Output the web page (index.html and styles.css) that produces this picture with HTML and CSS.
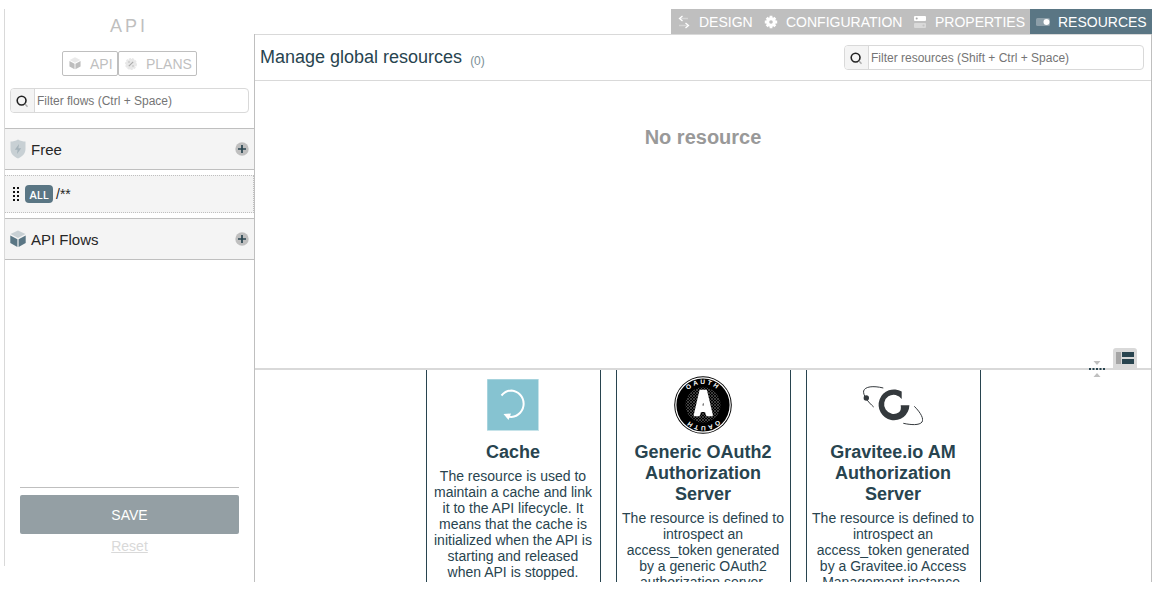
FILE: index.html
```html
<!DOCTYPE html>
<html lang="en">
<head>
<meta charset="utf-8">
<title>Resources</title>
<link rel="stylesheet" href="styles.css">
</head>
<body>
<svg class="defs" width="0" height="0">
  <symbol id="cube" viewBox="0 0 16 18">
    <path class="cube-top" d="M8 0.5 15.5 4 8 8 .5 4Z"/>
    <path class="cube-side" d="M.3 5.6 7.4 9.2V17L.3 13ZM15.7 5.6 8.6 9.2V17l7.1-4Z"/>
  </symbol>
  <symbol id="search" viewBox="0 0 14 14">
    <circle cx="6.600" cy="6.600" r="4.400" fill="none" stroke="#222" stroke-width="1.600"/>
    <path d="M10 10 12.500 12.700" stroke="#aaa" stroke-width="1.400"/>
  </symbol>
  <symbol id="plus" viewBox="0 0 14 14">
    <circle cx="7" cy="7" r="6.7" fill="#bfbfbf"/>
    <path d="M7 3v8M3 7h8" stroke="#28444f" stroke-width="1.7"/>
  </symbol>
</svg>
<div class="app">
  <aside class="side">
    <h1 class="side-title">API</h1>
    <div class="toggle">
      <button class="toggle-btn toggle-api"><svg class="icon pale" width="12" height="13"><use href="#cube"/></svg>API</button>
      <button class="toggle-btn toggle-plans"><svg class="icon" width="14" height="14" viewBox="0 0 14 14"><circle cx="7" cy="7" r="5" fill="#e8e8e8" stroke="#e8e8e8" stroke-width="2" stroke-dasharray="2.100 .9"/><circle cx="7" cy="7" r="4.800" fill="#e8e8e8"/><path d="M4.8 9.2 9.2 4.8" stroke="#aaa" stroke-width="1.1"/><circle cx="5" cy="5" r=".8" fill="#bbb"/><circle cx="9" cy="9" r=".8" fill="#bbb"/></svg>PLANS</button>
    </div>
    <div class="filter">
      <span class="filter-icon"><svg width="14" height="14"><use href="#search"/></svg></span>
      <span class="filter-text">Filter flows (Ctrl + Space)</span>
    </div>
    <div class="group">
      <svg width="16" height="20" viewBox="0 0 16 20"><path d="M8 .5C10.500 2 13 2.600 15.500 2.600V10C15.500 14.500 12.500 17.500 8 19.500 3.500 17.500.5 14.500.5 10V2.600C3 2.600 5.500 2 8 .5Z" fill="#c8d0d4"/><path d="M9 5 4.800 10.800H7.600L7 15l4.200-5.800H8.400Z" fill="#a5b3ba"/></svg>
      <span class="group-name">Free</span>
      <svg width="14" height="14"><use href="#plus"/></svg>
    </div>
    <div class="flow">
      <svg width="8" height="16" viewBox="0 0 8 16" fill="#111"><path d="M1 1h2v2H1zM5 1h2v2H5zM1 5h2v2H1zM5 5h2v2H5zM1 9h2v2H1zM5 9h2v2H5zM1 13h2v2H1zM5 13h2v2H5z"/></svg>
      <span class="method">ALL</span>
      <span class="path">/**</span>
    </div>
    <div class="group">
      <svg class="slate" width="16" height="18"><use href="#cube"/></svg>
      <span class="group-name">API Flows</span>
      <svg width="14" height="14"><use href="#plus"/></svg>
    </div>
    <div class="actions">
      <button class="save">SAVE</button>
      <span class="reset">Reset</span>
    </div>
  </aside>
  <main class="main">
    <nav class="tabs">
      <span class="tab tab-design"><svg class="icon" width="12" height="14" viewBox="0 0 12 14" fill="none" stroke="#fff" stroke-width="1.300"><path d="M4.500 1 1.500 3.500 4.500 6M7.500 8 10.500 10.500 7.500 13"/><path d="M2 3.500H10M1 10.500H10" opacity=".35"/></svg>DESIGN</span>
      <span class="tab tab-config"><svg class="icon" width="14" height="14" viewBox="0 0 14 14"><g stroke="#fff" stroke-width="2.800"><path d="M7 .8V13.200M.8 7H13.200M2.700 2.700 11.300 11.300M11.300 2.700 2.700 11.300"/></g><circle cx="7" cy="7" r="4.800" fill="#fff"/><circle cx="7" cy="7" r="1.800" fill="#bfbfbf"/></svg>CONFIGURATION</span>
      <span class="tab tab-props"><svg class="icon" width="12" height="12" viewBox="0 0 12 12"><rect width="12" height="5" rx="1" fill="#fff"/><rect y="7" width="12" height="5" rx="1" fill="#d9d9d9"/><circle cx="2.700" cy="2.500" r="1" fill="#aaa"/><circle cx="9.500" cy="9.500" r="1" fill="#c3c3c3"/></svg>PROPERTIES</span>
      <span class="tab tab-res"><svg class="icon" width="14" height="8" viewBox="0 0 14 8"><rect width="14" height="8" rx="1.500" fill="#8d9fa9"/><circle cx="10.500" cy="4" r="3" fill="#fff"/></svg>RESOURCES</span>
    </nav>
    <section class="panel">
      <header class="head">
        <h2 class="head-title">Manage global resources<small class="count">(0)</small></h2>
        <div class="filter filter-wide">
          <span class="filter-icon"><svg width="14" height="14"><use href="#search"/></svg></span>
          <span class="filter-text">Filter resources (Shift + Ctrl + Space)</span>
        </div>
      </header>
      <div class="empty">No resource
        <svg class="resizer" width="16" height="16" viewBox="0 0 16 16"><path d="M4.500 0h7L8 4ZM4.500 16h7L8 12Z" fill="#bfbfbf"/><path d="M0 8H16" stroke="#28444f" stroke-width="2" stroke-dasharray="2 1.500"/></svg>
        <svg class="layout" width="24" height="21" viewBox="0 0 24 21"><path d="M0 21V3Q0 0 3 0H21Q24 0 24 3V21Z" fill="#d9d9d9"/><path d="M3 4h5v12H3z" fill="#a5a5a5"/><path d="M9 4h12v5H9zM9 11h12v5H9z" fill="#28444f"/></svg>
      </div>
      <div class="cards">
        <article class="card">
          <svg class="logo" width="60" height="60" viewBox="0 0 60 60"><rect x="4" y="4" width="52" height="52" fill="#c6e3e9"/><rect x="4.500" y="4.500" width="50.500" height="50.500" fill="#86c3d1"/><path d="M18.500 20.500C22 16.500 24.500 15.500 28.500 15.500A13.300 13.300 0 0 1 28.500 42L26 41.700" fill="none" stroke="#fff" stroke-width="2"/><path d="M20.500 39 28 38.500 25.500 45Z" fill="#fff"/></svg>
          <h3 class="card-title">Cache</h3>
          <p class="card-text">The resource is used to maintain a cache and link it to the API lifecycle. It means that the cache is initialized when the API is starting and released when API is stopped.</p>
        </article>
        <article class="card">
          <svg class="logo" width="60" height="60" viewBox="0 0 60 60">
            <defs><pattern id="mesh" width="3" height="3" patternUnits="userSpaceOnUse"><path d="M0 0 3 3M3 0 0 3" stroke="#555" stroke-width=".7"/></pattern>
            <path id="arc-top" d="M9 30A21 21 0 0 1 51 30"/><path id="arc-bottom" d="M51 30A21 21 0 0 1 9 30"/></defs>
            <circle cx="30" cy="30" r="28.800" fill="#000"/><circle cx="30" cy="30" r="27.200" fill="none" stroke="#fff" stroke-width="1.200"/><circle cx="30" cy="30" r="17.500" fill="url(#mesh)"/>
            <path d="M27.500 15.800H33L38.800 40.200H34.200L32.800 36H27.200L25.800 40.200H21.800ZM28 31.500H32.300L30.200 23.500Z" fill="#fff" fill-rule="evenodd" stroke="#fff" stroke-width="2.200" stroke-linejoin="round"/>
            <text class="ring"><textPath href="#arc-top" startOffset="50%">OAUTH</textPath></text><text class="ring"><textPath href="#arc-bottom" startOffset="50%">OAUTH</textPath></text>
          </svg>
          <h3 class="card-title">Generic OAuth2 Authorization Server</h3>
          <p class="card-text">The resource is defined to introspect an access_token generated by a generic OAuth2 authorization server.</p>
        </article>
        <article class="card">
          <svg class="logo" width="60" height="60" viewBox="0 0 60 60"><path d="M38.700 16.500V24A9.600 9.600 0 1 0 36 37.300C37.800 36 38.200 33.500 37.700 30.300H46.400A15.400 15.400 0 1 1 38.700 16.500Z" fill="#34393d"/><g fill="none" stroke="#34393d"><path d="M20.300 13C10 10.500 2 11.500.6 16 0 20.500 5 27 10.700 32"/><path d="M51.300 31.300C58 38 61 44 59 47 56.500 50.500 48 50 40.300 48.300"/></g><circle cx="3.300" cy="23" r="2.700" fill="#34393d"/></svg>
          <h3 class="card-title">Gravitee.io AM Authorization Server</h3>
          <p class="card-text">The resource is defined to introspect an access_token generated by a Gravitee.io Access Management instance.</p>
        </article>
      </div>
    </section>
  </main>
</div>
</body>
</html>
```
FILE: styles.css
```css
* { box-sizing: border-box; }
body {
  margin: 0;
  padding: 9px 4px 0;
  background: #fff;
  color: #28444f;
  font-family: "Liberation Sans", Arial, sans-serif;
  overflow: hidden;
}
svg { display: block; flex: none; }
.defs { position: absolute; }
button { font-family: inherit; }
.cube-top { fill: #c8d0d4; }
.cube-side { fill: #5a7684; }
.pale { opacity: .45; filter: grayscale(1); }
.app { display: flex; height: 573px; }

/* Flows column */
.side {
  width: 250px;
  height: 557px;
  flex: none;
  display: flex;
  flex-direction: column;
  border-left: 1px solid #d9d9d9;
}
.side-title {
  margin: 0;
  padding: 6px 1px 0 0;
  height: 42px;
  font-size: 18px;
  line-height: 22px;
  font-weight: 400;
  letter-spacing: 3px;
  text-align: center;
  color: #bfbfbf;
}
.toggle { display: flex; padding-left: 57px; height: 25px; }
.toggle-btn {
  display: flex;
  align-items: center;
  padding: 0;
  border: 1px solid #bfbfbf;
  border-radius: 2px;
  background: #fff;
  color: #bfbfbf;
  font-size: 14px;
}
.toggle-api { width: 56px; padding-left: 6px; }
.toggle-api .icon { margin-right: 9px; }
.toggle-plans { width: 79px; padding-left: 5px; }
.toggle-plans .icon { margin-right: 8px; }
.filter {
  display: flex;
  width: 239px;
  height: 25px;
  margin: 12px 0 0 5px;
  border: 1px solid #d9d9d9;
  border-radius: 4px;
  overflow: hidden;
}
.filter-icon {
  display: flex;
  align-items: center;
  padding-left: 4px;
  width: 24px;
  background: #f4f4f4;
  border-right: 1px solid #d9d9d9;
}
.filter-text {
  padding-left: 2px;
  font-size: 12px;
  line-height: 24px;
  color: #757575;
}
.group {
  display: flex;
  align-items: center;
  height: 42px;
  padding: 0 5px;
  background: #f4f4f4;
  border: solid #bfbfbf;
  border-width: 1px 0;
}
.filter + .group { margin-top: 15px; }
.group-name {
  flex: 1;
  padding-left: 5px;
  font-size: 15px;
  color: #262626;
}
.flow {
  display: flex;
  align-items: center;
  height: 38px;
  margin: 5px 0;
  padding-left: 7px;
  background: #f4f4f4;
  border: 1px dotted #bfbfbf;
  border-left: 0;
}
.method {
  width: 28px;
  height: 18px;
  margin: 0 3px 0 5px;
  border-radius: 4px;
  background: #5a7684;
  color: #fff;
  font: 600 11px/19px "Open Sans", "Noto Sans", sans-serif;
  text-align: center;
}
.path { font-size: 14px; color: #262626; }
.actions {
  display: flex;
  flex-direction: column;
  align-items: center;
  width: 219px;
  margin: 227px 0 0 15px;
  padding-top: 7px;
  border-top: 1px solid #bfbfbf;
}
.save {
  width: 219px;
  height: 39px;
  padding: 0;
  border: 0;
  border-radius: 2px;
  background: #949fa4;
  color: #fff;
  font-size: 14px;
}
.reset {
  margin-top: 4px;
  font-size: 14px;
  line-height: 16px;
  color: #d9d9d9;
  text-decoration: underline;
}

/* Resource area */
.main { flex: 1; min-width: 0; }
.tabs { display: flex; justify-content: flex-end; height: 25px; }
.tab {
  display: flex;
  align-items: center;
  padding-left: 6px;
  background: #bfbfbf;
  color: #fff;
  font-size: 14px;
  white-space: nowrap;
}
.tab .icon { margin-right: 8px; }
.tab-design { width: 87px; padding-left: 7px; }
.tab-design .icon { margin-right: 9px; }
.tab-config { width: 149px; }
.tab-props { width: 123px; padding-left: 7px; }
.tab-props .icon { margin-right: 9px; }
.tab-res { width: 122px; background: #5a7684; }
.panel {
  height: 548px;
  display: flex;
  flex-direction: column;
  border: solid #bfbfbf;
  border-width: 0 1px;
}
.head {
  display: flex;
  justify-content: space-between;
  height: 47px;
  padding: 0 7px 0 5px;
  border: solid #d9d9d9;
  border-width: 1px 0;
}
.head-title {
  display: flex;
  margin: 0;
  font-size: 18px;
  font-weight: 400;
  line-height: 44px;
}
.count { margin-left: 8px; padding-top: 4px; font-size: 12px; color: #7c8f97; }
.filter-wide { width: 300px; margin-top: 10px; }
.empty {
  position: relative;
  height: 289px;
  padding-top: 44px;
  border-bottom: 2px solid #d9d9d9;
  font-size: 20px;
  line-height: 24px;
  font-weight: 700;
  text-align: center;
  color: #999;
}
.resizer { position: absolute; right: 46px; bottom: -9px; }
.layout { position: absolute; right: 14px; bottom: -1px; }
.cards {
  flex: 1;
  min-height: 0;
  display: flex;
  justify-content: center;
  gap: 15px;
  overflow: hidden;
}
.card {
  width: 175px;
  height: 260px;
  padding: 5px 5px 0;
  border: solid #28444f;
  border-width: 0 1px;
  text-align: center;
}
.logo { margin: 0 auto; }
.card-title { margin: 7px 0 5px; font-size: 18px; line-height: 21px; }
.card-text { margin: 0; font-size: 14px; line-height: 16px; }
.ring { fill: #fff; font-size: 6.5px; font-weight: 700; letter-spacing: 2px; text-anchor: middle; }
```
